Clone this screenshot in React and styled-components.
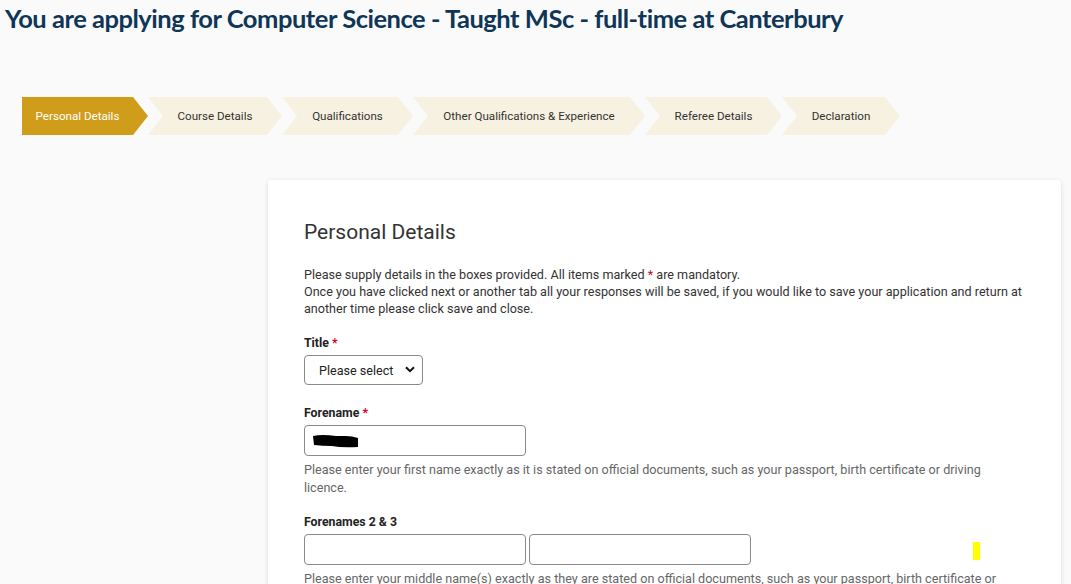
import React from 'react';
import styled, { createGlobalStyle } from 'styled-components';

const GlobalStyle = createGlobalStyle`
  html, body {
    margin: 0;
    padding: 0;
    background: #fafafa;
  }
  body {
    font-family: Roboto, "Liberation Sans", Arial, sans-serif;
    color: #333;
    overflow: hidden;
  }
`;

const Page = styled.div`
  width: 1071px;
  height: 584px;
  overflow: hidden;
`;

const Title = styled.h1`
  margin: 0;
  padding: 2px 0 0 5px;
  font-family: Lato, "Open Sans", sans-serif;
  font-weight: 700;
  font-size: 25.5px;
  line-height: 32px;
  letter-spacing: -0.47px;
  color: #0f3657;
`;

const Steps = styled.nav`
  display: flex;
  margin: 63px 0 0 22px;
`;

const Step = styled.div`
  display: flex;
  align-items: center;
  justify-content: center;
  box-sizing: border-box;
  width: ${p => p.$w}px;
  height: 38px;
  padding: ${p => (p.$first ? '0 15px 0 0' : '0 15px 0 15px')};
  font-size: 11.6px;
  color: ${p => (p.$active ? '#fff' : '#333')};
  background: ${p => (p.$active ? '#d09d1b' : '#f7f1e1')};
  clip-path: ${p =>
    p.$first
      ? 'polygon(0 0, calc(100% - 15px) 0, 100% 50%, calc(100% - 15px) 100%, 0 100%)'
      : 'polygon(0 0, calc(100% - 15px) 0, 100% 50%, calc(100% - 15px) 100%, 0 100%, 15px 50%)'};
`;

const Card = styled.section`
  position: relative;
  box-sizing: border-box;
  width: 793px;
  margin: 45px 0 0 268px;
  padding: 38px 35px 40px 36px;
  background: #fff;
  border-radius: 4px;
  box-shadow: 0 1px 5px rgba(0, 0, 0, 0.12);
  min-height: 420px;
`;

const Heading = styled.h2`
  margin: 0 0 20px;
  font-size: 21px;
  font-weight: 400;
  line-height: 28px;
  color: #333;
`;

const Intro = styled.p`
  margin: 0 0 18px;
  font-size: 12.6px;
  line-height: 17px;
  color: #333;
`;

const Req = styled.span`
  color: #d0021b;
`;

const Field = styled.div`
  margin-bottom: 20px;
`;

const Label = styled.div`
  font-size: 12.3px;
  font-weight: 700;
  line-height: 16px;
  color: #222;
  margin-bottom: 4px;
`;

const SelectWrap = styled.div`
  position: relative;
  width: 119px;
  height: 30px;
`;

const Select = styled.select`
  appearance: none;
  box-sizing: border-box;
  width: 100%;
  height: 100%;
  padding: 0 0 0 14px;
  font-family: Roboto, "Liberation Sans", Arial, sans-serif;
  font-size: 12.6px;
  color: #222;
  background: #fff;
  border: 1px solid #8a8a8a;
  border-radius: 4px;
`;

const Chevron = styled.svg`
  position: absolute;
  right: 8px;
  top: 11px;
  pointer-events: none;
`;

const Row = styled.div`
  display: flex;
  gap: 3px;
`;

const InputBox = styled.div`
  position: relative;
  box-sizing: border-box;
  width: 222px;
  height: 31px;
  display: flex;
  align-items: center;
  padding-left: 7px;
  border: 1px solid #8a8a8a;
  border-radius: 4px;
  background: #fff;
`;

const Help = styled.p`
  margin: 5px 0 -3px;
  font-size: 12.6px;
  line-height: 18px;
  color: #666;
`;

const Marker = styled.div`
  position: absolute;
  left: 705px;
  top: 362px;
  width: 7px;
  height: 18px;
  background: #ffff00;
`;

const steps = [
  { label: 'Personal Details', w: 126 },
  { label: 'Course Details', w: 134 },
  { label: 'Qualifications', w: 131 },
  { label: 'Other Qualifications & Experience', w: 232 },
  { label: 'Referee Details', w: 137 },
  { label: 'Declaration', w: 118 },
];

const App = () => {
  return (
    <Page>
      <GlobalStyle />
      <Title>You are applying for Computer Science - Taught MSc - full-time at Canterbury</Title>
      <Steps>
        {steps.map((s, i) => (
          <Step key={s.label} $w={s.w} $first={i === 0} $active={i === 0}>
            {s.label}
          </Step>
        ))}
      </Steps>
      <Card>
        <Heading>Personal Details</Heading>
        <Intro>
          Please supply details in the boxes provided. All items marked <Req>*</Req> are mandatory.
          <br />
          Once you have clicked next or another tab all your responses will be saved, if you would like to save your application and return at another time please click save and close.
        </Intro>
        <Field>
          <Label>Title <Req>*</Req></Label>
          <SelectWrap>
            <Select defaultValue="">
              <option value="">Please select</option>
              <option>Mr</option>
              <option>Mrs</option>
              <option>Ms</option>
              <option>Dr</option>
            </Select>
            <Chevron width="10" height="7" viewBox="0 0 10 7">
              <path d="M1 1.2 L5 5.2 L9 1.2" fill="none" stroke="#111" strokeWidth="2" />
            </Chevron>
          </SelectWrap>
        </Field>
        <Field>
          <Label>Forename <Req>*</Req></Label>
          <InputBox>
            <svg width="48" height="16" viewBox="0 0 48 16">
              <path d="M1 3 Q10 1 24 3 L34 3 Q40 3 46 5 L46 14 Q30 15 20 13 Q10 13 2 12 Z" fill="#000" />
            </svg>
          </InputBox>
          <Help>Please enter your first name exactly as it is stated on official documents, such as your passport, birth certificate or driving licence.</Help>
        </Field>
        <Field>
          <Label>Forenames 2 &amp; 3</Label>
          <Row>
            <InputBox />
            <InputBox />
          </Row>
          <Help>Please enter your middle name(s) exactly as they are stated on official documents, such as your passport, birth certificate or driving licence.</Help>
        </Field>
        <Marker />
      </Card>
    </Page>
  );
};

export default App;
